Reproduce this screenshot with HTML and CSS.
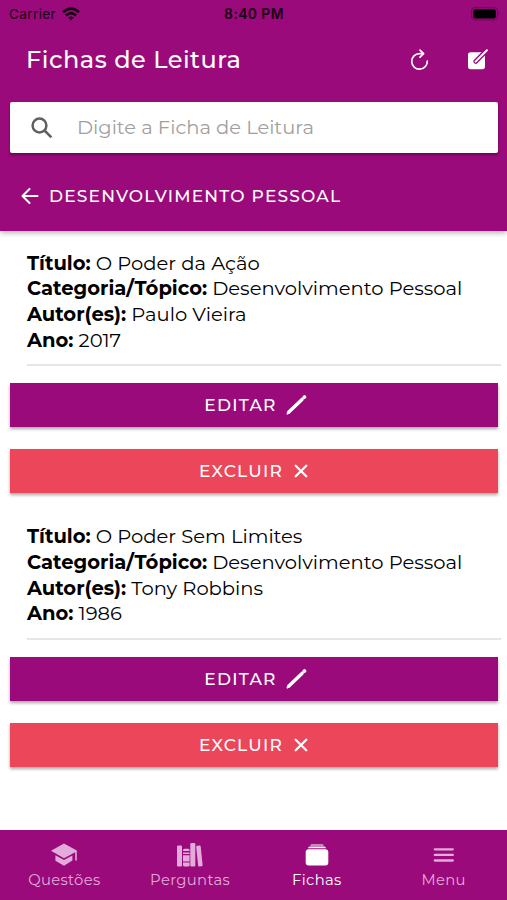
FILE: index.html
```html
<!DOCTYPE html>
<html lang="pt-BR">
<head>
<meta charset="utf-8">
<title>Fichas de Leitura</title>
<link rel="stylesheet" href="styles.css">
</head>
<body>
<div class="app">
  <header class="header">
    <div class="status">
      <div class="carrier"><span>Carrier</span>
        <svg width="18" height="14" viewBox="0 0 18 14" fill="none" stroke="#160012" stroke-width="2.6"><path d="M1 5.2Q9-2 17 5.2M4 8.4Q9 4 14 8.4"/><path d="M9 13.4L6.2 10.5Q9 8.3 11.8 10.5Z" fill="#160012" stroke="none"/></svg>
      </div>
      <div class="clock">8:40 PM</div>
      <svg class="battery" width="30" height="14" viewBox="0 0 30 14"><rect x=".6" y=".6" width="25.8" height="12.4" rx="3.6" fill="none" stroke="#6c0756" stroke-width="1.1"/><rect x="2.2" y="2.2" width="22.6" height="9.2" rx="2" fill="#000"/><path d="M27.6 4.6q2 2.2 0 4.4z" fill="#6c0756"/></svg>
    </div>
    <div class="toolbar">
      <h1 class="title">Fichas de Leitura</h1>
      <div class="actions">
        <svg width="20" height="22" viewBox="0 0 20 22" fill="none" stroke="#fff" stroke-width="1.7" stroke-linecap="round" stroke-linejoin="round"><path d="M17.3 12A7.8 7.8 0 1 1 9.5 4.6H13"/><path d="M10 1.2L13.6 4.7 10 8.2"/></svg>
        <svg width="22" height="22" viewBox="0 0 22 22"><rect x="1" y="3.2" width="17" height="17" rx="2.6" fill="#fff"/><path d="M8.8 12.4L19.5 1.6" stroke="#9b0a7b" stroke-width="4.8" stroke-linecap="round"/><path d="M8.6 12.6L19.9 1.3" stroke="#fff" stroke-width="2" stroke-linecap="round"/></svg>
      </div>
    </div>
    <div class="search">
      <svg width="22" height="22" viewBox="0 0 22 22" fill="none" stroke="#606060" stroke-width="2.5"><circle cx="8.5" cy="8.5" r="6.9"/><path d="M13.5 13.5L20.4 20.4"/></svg>
      <span class="placeholder">Digite a Ficha de Leitura</span>
    </div>
    <div class="back">
      <svg width="18" height="18" viewBox="0 0 18 18" fill="none" stroke="#fff" stroke-width="2.1" stroke-linecap="round" stroke-linejoin="round"><path d="M8.5 2L1.5 9L8.5 16M1.5 9H16.5"/></svg>
      <span>DESENVOLVIMENTO PESSOAL</span>
    </div>
  </header>

  <main class="content">
    <article class="item">
      <div class="details">
        <p><b>Título:</b> <span>O Poder da Ação</span></p>
        <p><b>Categoria/Tópico:</b> <span>Desenvolvimento Pessoal</span></p>
        <p><b>Autor(es):</b> <span>Paulo Vieira</span></p>
        <p><b>Ano:</b> <span>2017</span></p>
      </div>
      <div class="btn edit"><span>EDITAR</span><svg width="21" height="20" viewBox="0 0 21 20" stroke="#fff" stroke-linecap="round"><path d="M2.600 17.200L16 4.400" stroke-width="3.400"/><path d="M1.400 18.700L3 17" stroke-width="1.800"/><path d="M18.200 2.300L18.500 2" stroke-width="3.600"/></svg></div>
      <div class="btn delete"><span>EXCLUIR</span><svg width="14" height="14" viewBox="0 0 14 14" stroke="#fff" stroke-width="2.3" stroke-linecap="round"><path d="M1.7 1.7L12.3 12.3M12.3 1.7L1.7 12.3"/></svg></div>
    </article>
    <article class="item">
      <div class="details">
        <p><b>Título:</b> <span>O Poder Sem Limites</span></p>
        <p><b>Categoria/Tópico:</b> <span>Desenvolvimento Pessoal</span></p>
        <p><b>Autor(es):</b> <span>Tony Robbins</span></p>
        <p><b>Ano:</b> <span>1986</span></p>
      </div>
      <div class="btn edit"><span>EDITAR</span><svg width="21" height="20" viewBox="0 0 21 20" stroke="#fff" stroke-linecap="round"><path d="M2.600 17.200L16 4.400" stroke-width="3.400"/><path d="M1.400 18.700L3 17" stroke-width="1.800"/><path d="M18.200 2.300L18.500 2" stroke-width="3.600"/></svg></div>
      <div class="btn delete"><span>EXCLUIR</span><svg width="14" height="14" viewBox="0 0 14 14" stroke="#fff" stroke-width="2.3" stroke-linecap="round"><path d="M1.7 1.7L12.3 12.3M12.3 1.7L1.7 12.3"/></svg></div>
    </article>
  </main>

  <nav class="tabs">
    <div class="tab"><svg width="28" height="26" viewBox="0 0 28 26" fill="currentColor"><path d="M14 1.6L26.8 8.6V18.4H25.2V10.2L14 16.2L1 8.8Z"/><path d="M5.4 13.2L14 18L22.4 13.4V18.6L14 23.8L5.4 18.8Z"/></svg><span>Questões</span></div>
    <div class="tab"><svg width="28" height="26" viewBox="0 0 28 26" fill="currentColor"><rect x="1" y="3.4" width="5" height="21" rx="1.2"/><path d="M7 8.2q0-1.5 1.5-1.5h3.6q1.5 0 1.5 1.5V9H7zM7 10.4h6.6V12H7zM7 13.2h6.6v6.2H7zM7 20.6h6.6v2.3q0 1.5-1.5 1.5H8.5q-1.5 0-1.5-1.5z"/><rect x="14.3" y="1" width="5" height="23.4" rx="1.2"/><path d="M20.2 5q-.1-1.1 1-1.2l2.3-.2q1.1-.1 1.2 1l1.9 18.3q.1 1.1-1 1.3l-2.3.2q-1.1.1-1.2-1z"/></svg><span>Perguntas</span></div>
    <div class="tab active"><svg width="28" height="26" viewBox="0 0 28 26" fill="currentColor"><path d="M7.3 3.6q0-1.2 1.2-1.2h11q1.2 0 1.2 1.2zM5 6.3q.2-1.7 1.8-1.7h14.4q1.6 0 1.8 1.7z"/><rect x="2.7" y="7.2" width="22.6" height="16.2" rx="3"/></svg><span>Fichas</span></div>
    <div class="tab"><svg width="28" height="26" viewBox="0 0 28 26" stroke="currentColor" stroke-width="2.3" stroke-linecap="round"><path d="M4.8 7.3H22.8M4.8 12.9H22.8M4.8 18.5H22.8"/></svg><span>Menu</span></div>
  </nav>
</div>
</body>
</html>
```
FILE: styles.css
```css
* { box-sizing: border-box; }
body {
  margin: 0;
  background: #fff;
  color: #000;
  font-family: Montserrat, Inter, "Liberation Sans", sans-serif;
}
svg { display: block; flex: none; }
.app { display: flex; flex-direction: column; height: 900px; overflow: hidden; }

.header {
  height: 231px;
  flex: none;
  background: #9b0a7b;
  color: #fff;
  box-shadow: 0 1px 6px rgba(0, 0, 0, .4);
}
.status {
  display: grid;
  grid-template-columns: 1fr auto 1fr;
  align-items: center;
  height: 27px;
  padding: 0 6px 0 9px;
  color: #160012;
  font: 13.5px Inter, sans-serif;
}
.carrier { display: flex; align-items: center; gap: 6px; letter-spacing: .4px; }
.clock { margin-right: 2px; font-weight: 600; font-size: 13.9px; letter-spacing: .4px; }
.battery { justify-self: end; }
.toolbar {
  display: flex;
  align-items: center;
  justify-content: space-between;
  height: 65px;
  padding: 0 18px 0 26px;
}
.title { margin: 0; font-size: 24px; font-weight: 500; letter-spacing: .5px; }
.actions { display: flex; gap: 37px; }
.search {
  display: flex;
  align-items: center;
  gap: 24px;
  height: 51px;
  margin: 10px 9px 0 10px;
  padding-left: 21px;
  border-radius: 2px;
  background: #fff;
  box-shadow: 0 2px 3px rgba(0, 0, 0, .35);
}
.placeholder { padding-bottom: 2px; color: #a0a0a0; font-size: 19.5px; }
.back {
  display: flex;
  align-items: center;
  gap: 10px;
  height: 86px;
  padding-left: 21px;
  font-size: 17px;
  font-weight: 500;
  letter-spacing: 1.2px;
}

.content { flex: 1; padding-top: 19px; }
.item { height: 273.7px; }
.details {
  height: 116px;
  margin: 0 6px 17px 27px;
  padding-top: .6px;
  border-bottom: 2px solid #e6e6e6;
}
.details p { margin: 0; font-size: 19.55px; line-height: 25.65px; white-space: nowrap; }
.details b { font-weight: 700; }
.btn {
  display: flex;
  align-items: center;
  justify-content: center;
  height: 44px;
  margin: 0 9px 22px 10px;
  color: #fff;
  font-size: 17px;
  font-weight: 500;
  letter-spacing: 1.25px;
  box-shadow: 0 2px 3px rgba(0, 0, 0, .35);
}
.edit { gap: 9px; padding-left: 3px; background: #9b0a7b; }
.delete { gap: 11px; padding-right: 1px; background: #ec465b; }

.tabs {
  display: grid;
  grid-template-columns: repeat(4, 1fr);
  height: 70px;
  padding-top: 12px;
  background: #9b0a7b;
  color: #e2abd9;
}
.tab { display: flex; flex-direction: column; align-items: center; gap: 3px; font-size: 14.8px; letter-spacing: .35px; }
.tab:first-child { padding-left: 2px; }
.active { color: #fff; }
```
